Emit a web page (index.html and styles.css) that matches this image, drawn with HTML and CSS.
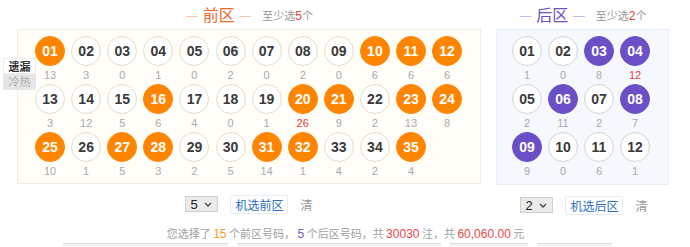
FILE: index.html
```html
<!DOCTYPE html>
<html lang="zh-CN">
<head>
  <meta charset="UTF-8" />
  <title>大乐透选号</title>
  <link rel="stylesheet" href="styles.css">
</head>
<body>
  <div class="page">
    <div class="tabs">
      <div class="tab active">遗漏</div>
      <div class="tab">冷热</div>
    </div>

    <div class="zones">
      <div class="zone front">
        <div class="zone-title">
          <span class="name"><i>—</i> 前区 <i>—</i></span>
          <span class="hint">至少选<b>5</b>个</span>
        </div>
        <div class="box">
          <div class="balls" id="frontBalls"></div>
        </div>
        <div class="tools">
          <span class="pick">5<svg width="8" height="5" viewBox="0 0 8 5"><path d="M1 1l3 3 3-3" fill="none" stroke="#444" stroke-width="1.3"/></svg></span>
          <button>机选前区</button>
          <span class="clear">清</span>
        </div>
      </div>

      <div class="zone back">
        <div class="zone-title">
          <span class="name"><i>—</i> 后区 <i>—</i></span>
          <span class="hint">至少选<b>2</b>个</span>
        </div>
        <div class="box">
          <div class="balls" id="backBalls"></div>
        </div>
        <div class="tools">
          <span class="pick">2<svg width="8" height="5" viewBox="0 0 8 5"><path d="M1 1l3 3 3-3" fill="none" stroke="#444" stroke-width="1.3"/></svg></span>
          <button>机选后区</button>
          <span class="clear">清</span>
        </div>
      </div>
    </div>

    <p class="summary">您选择了 <span class="n-front">15</span> 个前区号码， <span class="n-back">5</span> 个后区号码，共 <span class="n-red">30030</span> 注，共 <span class="n-red">60,060.00</span> 元</p>

    <div class="bottom-bar">
      <div class="stub s1"></div>
      <div class="stub s2"></div>
      <div class="stub s3"></div>
      <div class="stub s4"></div>
    </div>
  </div>

  <script>
    // miss counts, selected numbers, hot marks
    const front = {
      miss: [13,3,0,1,0,2,0,2,0,6,6,6,3,12,5,6,4,0,1,26,9,2,13,8,10,1,5,3,2,5,14,1,4,2,4],
      picked: [1,10,11,12,16,20,21,23,24,25,27,28,31,32,35],
      hot: [20]
    };
    const back = {
      miss: [1,0,8,12,2,11,2,7,9,0,6,1],
      picked: [3,4,6,8,9],
      hot: [4]
    };

    function drawBalls(id, data) {
      let html = "";
      data.miss.forEach((m, i) => {
        const n = i + 1;
        const num = n < 10 ? "0" + n : "" + n;
        const on = data.picked.includes(n) ? " on" : "";
        const hot = data.hot.includes(n) ? " hot" : "";
        html += `<div class="cell"><span class="ball${on}">${num}</span><span class="miss${hot}">${m}</span></div>`;
      });
      document.getElementById(id).innerHTML = html;
    }

    drawBalls("frontBalls", front);
    drawBalls("backBalls", back);
  </script>
</body>
</html>
```

FILE: styles.css
```css
* { box-sizing: border-box; }
body {
  margin: 0;
  font-family: "Liberation Sans", "Noto Sans CJK SC", sans-serif;
  background: #fff;
  color: #333;
  overflow: hidden;
}
.page {
  position: relative;
  width: 690px;
  height: 247px;
}
.tabs {
  position: absolute;
  left: 3px;
  top: 58px;
  width: 33px;
  font-size: 11px;
  font-family: "Noto Sans CJK SC", sans-serif;
  z-index: 2;
}
.tab {
  height: 16px;
  line-height: 15px;
  text-align: center;
  background: #e6e6e6;
  color: #aaa;
}
.tab.active {
  background: #fff;
  color: #333;
  font-weight: bold;
  border: 1px solid #eee;
}
.zones {
  display: flex;
  padding-left: 17px;
}
.zone-title {
  height: 29px;
  display: flex;
  justify-content: center;
  align-items: center;
  gap: 10px;
  padding-bottom: 1px;
  font-family: "Noto Sans CJK SC", sans-serif;
}
.zone-title .name {
  font-size: 16px;
}
.zone-title i {
  font-style: normal;
  font-size: 14px;
}
.zone-title .hint {
  font-size: 11px;
  color: #999;
  margin-top: 1px;
}
.zone-title .hint b {
  font-weight: normal;
  color: #e83c3c;
  font-family: "Liberation Sans", sans-serif;
  font-size: 12px;
}
.front .zone-title .name { color: #ef6b2d; }
.front .zone-title i { color: #f29a70; }
.back .zone-title .name { color: #6655c2; }
.back .zone-title i { color: #9488d4; }

.front { width: 464px; flex: none; }
.back { width: 173px; margin-left: 15px; flex: none; }

.box {
  border: 1px solid #f2eedf;
  background: #fffef9;
  padding: 6px 0 3px 14px;
}
.back .box {
  border-color: #e6eef8;
  background: #f5f9fd;
  padding: 6px 0 4px 12px;
}
.balls {
  display: flex;
  flex-wrap: wrap;
}
.front .balls { width: 436px; }
.back .balls { width: 145px; }
.cell {
  width: 36px;
  height: 48px;
  display: flex;
  flex-direction: column;
  align-items: center;
}
.front .cell { width: 36.1px; }
.ball {
  width: 30px;
  height: 30px;
  border-radius: 50%;
  border: 1px solid #e2dec8;
  background: #fff;
  display: flex;
  align-items: center;
  justify-content: center;
  font-size: 14px;
  font-weight: bold;
  color: #3a3a3a;
}
.back .ball { border-color: #d4d4d4; }
.front .ball.on {
  background: #ff8500;
  border-color: #ff8500;
  color: #fff;
}
.back .ball.on {
  background: #6a4fc6;
  border-color: #6a4fc6;
  color: #fff;
}
.miss {
  height: 18px;
  line-height: 19px;
  font-size: 11px;
  color: #aaa;
}
.miss.hot { color: #e83c3c; }

.tools {
  height: 40px;
  display: flex;
  justify-content: center;
  align-items: center;
  font-family: "Noto Sans CJK SC", sans-serif;
}
.back .tools { padding-left: 3px; }
.pick {
  width: 33px;
  height: 16px;
  display: flex;
  align-items: center;
  justify-content: space-between;
  padding: 0 5px 0 4px;
  font-size: 13px;
  font-family: "Liberation Sans", sans-serif;
  color: #222;
  background: #ebebeb;
  border: 1px solid #cfcfcf;
}
.tools button {
  margin-left: 12px;
  width: 58px;
  height: 19px;
  padding: 0;
  font-size: 12px;
  font-family: "Noto Sans CJK SC", sans-serif;
  color: #2c6fbd;
  background: #fff;
  border: 1px solid #e6edf5;
  border-radius: 2px;
}
.tools .clear {
  margin-left: 12px;
  font-size: 12px;
  color: #999;
}
.summary {
  margin: 0;
  text-align: center;
  font-size: 11px;
  line-height: 16px;
  color: #a0a0a0;
  font-family: "Noto Sans CJK SC", sans-serif;
  padding-left: 1px;
}
.summary span {
  font-family: "Liberation Sans", sans-serif;
  font-size: 12px;
}
.n-front { color: #f39a2e; }
.n-back { color: #6a5ac4; }
.n-red { color: #e84848; }

.bottom-bar {
  position: absolute;
  left: 0;
  top: 243px;
  width: 690px;
  height: 4px;
  display: flex;
}
.stub {
  height: 4px;
  border-top: 1px solid #dcdcdc;
  background: #f6f6f6;
}
.s1 { margin-left: 63px; width: 165px; }
.s2 { margin-left: 9px; width: 204px; }
.s3 { margin-left: 9px; width: 78px; }
.s4 { margin-left: 9px; width: 75px; }
```
